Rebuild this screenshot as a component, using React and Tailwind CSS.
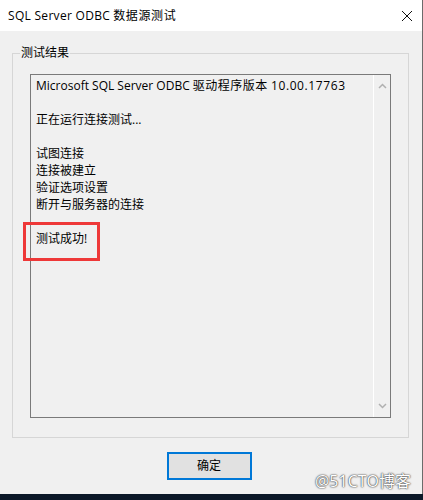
export default function App() {
  const font = { fontFamily: '"Open Sans", "Noto Sans CJK SC", sans-serif' };
  return (
    <div
      className="relative w-[423px] h-[500px] flex flex-col bg-[#0c1828] text-[12px] text-black"
      style={font}
    >
      <div className="flex flex-col h-[494px] bg-[#f0f0f0] border-r border-[#6b6b6b]">
        <div className="h-[31px] bg-white flex items-center justify-between pl-[8px] pr-[8px]">
          <span className="text-[12px] leading-none">
            <span className="tracking-[0.3px]">SQL Server ODBC</span> <span className="tracking-[0.6px]">数据源测试</span>
          </span>
          <svg width="12" height="12" viewBox="0 0 12 12" className="mr-[1px]">
            <path d="M1 1 L11 11 M11 1 L1 11" stroke="#111" strokeWidth="1" fill="none" />
          </svg>
        </div>
        <div className="relative mt-[22px] ml-[12px] w-[397px] h-[385px] border border-[#d6d6d6] px-[17px] pt-[20px]">
          <span className="absolute -top-[9px] left-[7px] bg-[#f0f0f0] px-[1px] leading-[16px]">测试结果</span>
          <div className="flex w-[361px] h-[344px] border border-[#7a7a7a]">
            <div className="flex-1 pl-[5px] pt-[2px] leading-[17px] relative">
              <div>
                Microsoft SQL Server ODBC <span className="tracking-[0.5px]">驱动程序版本</span>{" "}
                <span className="tracking-[0.6px]">10.00.17763</span>
              </div>
              <div>&nbsp;</div>
              <div>正在运行连接测试...</div>
              <div>&nbsp;</div>
              <div>试图连接</div>
              <div>连接被建立</div>
              <div>验证选项设置</div>
              <div>断开与服务器的连接</div>
              <div>&nbsp;</div>
              <div>测试成功!</div>
            </div>
            <div className="w-[17px] border-l border-white flex flex-col justify-between items-center py-[8px]">
              <svg width="9" height="6" viewBox="0 0 9 6">
                <path d="M1 5 L4.5 1.5 L8 5" stroke="#b0b0b0" strokeWidth="1.5" fill="none" />
              </svg>
              <svg width="9" height="6" viewBox="0 0 9 6">
                <path d="M1 1 L4.5 4.5 L8 1" stroke="#b0b0b0" strokeWidth="1.5" fill="none" />
              </svg>
            </div>
          </div>
        </div>
        <div className="flex justify-center pr-[4px] mt-[14px]">
          <div className="w-[85px] h-[28px] border-2 border-[#0078d7] bg-[#e1e1e1] flex items-center justify-center">
            确定
          </div>
        </div>
      </div>
      <div className="absolute left-[23px] top-[222px] w-[77px] h-[39px] border-[3px] border-[#ee3838]"></div>
      <div className="absolute left-[315px] top-[471px] text-[16px] leading-[20px] text-white [text-shadow:0_0_2px_#333,0_0_1px_#333]">
        @51CTO博客
      </div>
    </div>
  );
}
